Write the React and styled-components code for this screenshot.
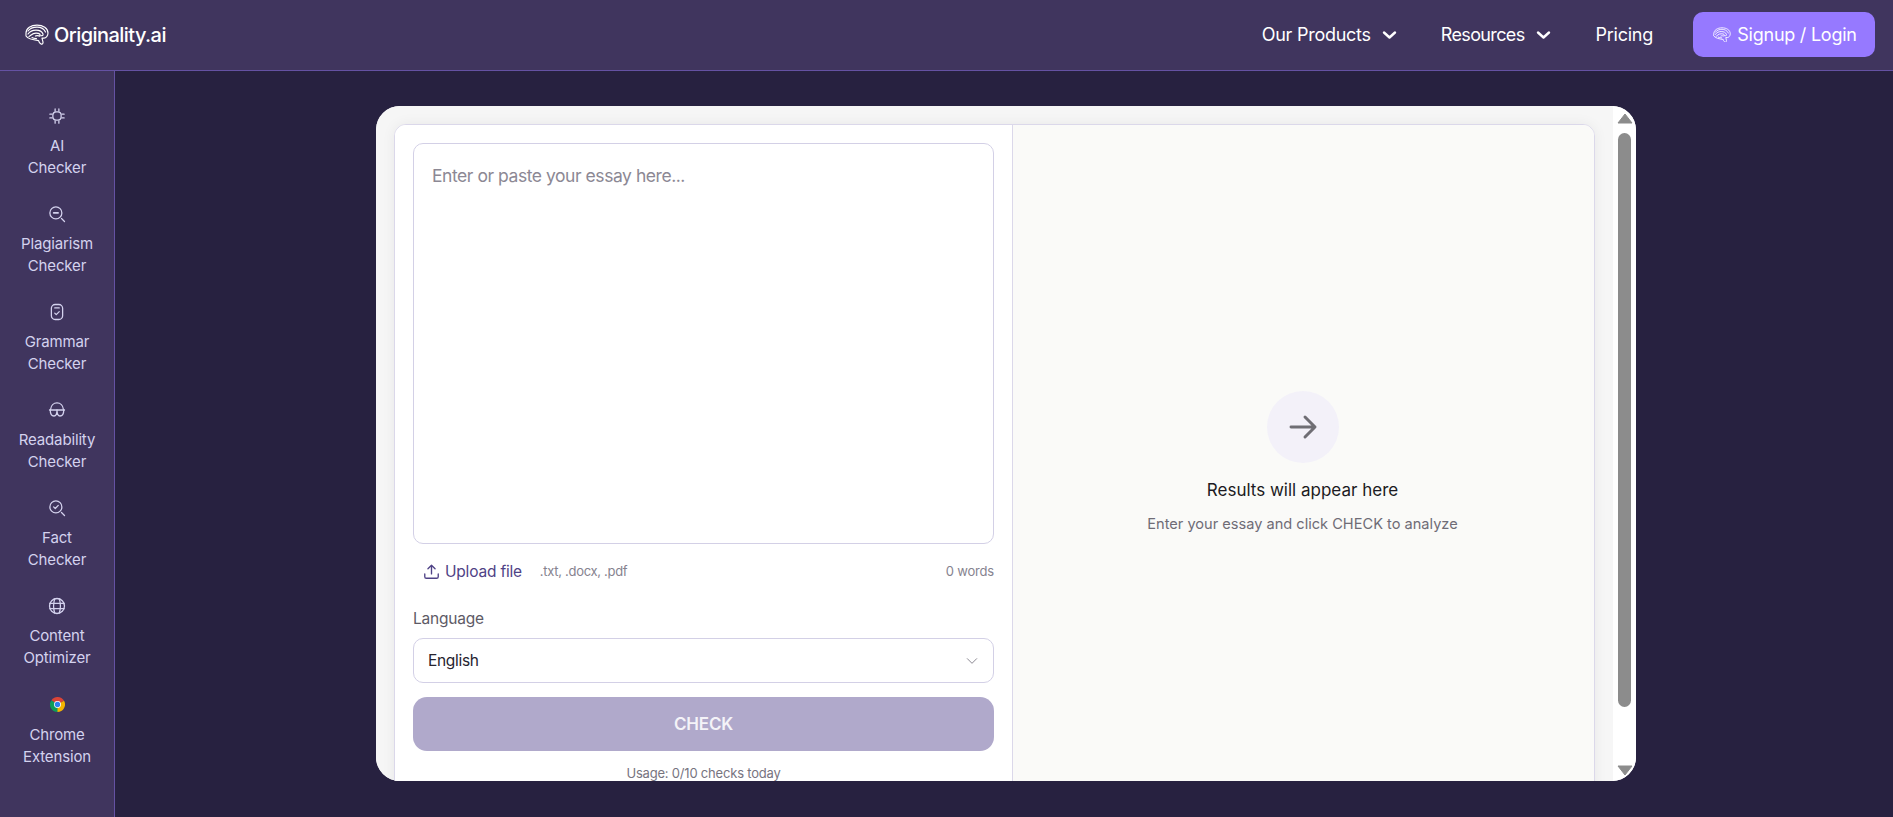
import React from "react";
import styled, { createGlobalStyle } from "styled-components";

const Global = createGlobalStyle`
  html, body { margin: 0; padding: 0; height: 100%; overflow: hidden; background: #272140; }
  body { font-family: Inter, "Liberation Sans", sans-serif; }
  * { box-sizing: border-box; }
`;
const Page = styled.div`display:flex;flex-direction:column;height:100vh;`;
const Header = styled.header`
  flex:none;height:71px;display:flex;align-items:center;justify-content:space-between;
  padding:0 18px 1px 25px;background:#40355e;border-bottom:1px solid #6552a3;
`;
const Logo = styled.div`display:flex;align-items:center;gap:5px;color:#fff;font-size:20px;font-weight:500;letter-spacing:-.55px;`;
const Nav = styled.nav`display:flex;align-items:center;`;
const NavItem = styled.a`
  display:flex;align-items:center;gap:11px;color:#fff;font-size:18px;font-weight:400;letter-spacing:${p=>p.$ls}px;margin-right:${p=>p.$mr}px;
`;
const LoginButton = styled.button`
  width:182px;height:45px;border:0;border-radius:10px;padding:0 0 0 2px;background:#9679ff;color:#fff;font:400 18px Inter,sans-serif;letter-spacing:-.25px;
  display:flex;align-items:center;justify-content:center;gap:6px;
`;
const Body = styled.div`flex:1;display:flex;min-height:0;`;
const Sidebar = styled.aside`
  flex:none;width:115px;background:#40355e;border-right:1px solid #6552a3;padding-top:35px;display:flex;flex-direction:column;
`;
const SideItem = styled.a`
  height:98.1px;display:flex;flex-direction:column;align-items:center;color:#d4d2ee;font-size:15px;line-height:22px;text-align:center;letter-spacing:-.15px;
`;
const SideIcon = styled.span`width:18px;height:20px;margin-bottom:9px;display:flex;align-items:center;justify-content:center;`;
const Main = styled.main`flex:1;padding:35px 257px 36px 261px;min-width:0;`;
const Card = styled.div`height:100%;display:flex;border-radius:24px;overflow:hidden;background:#fff;`;
const Scroll = styled.div`flex:1;min-width:0;overflow:hidden;background:#f6f6f6;padding:18px 18px 0 18px;`;
const Panel = styled.div`height:678px;display:flex;border:1px solid #dbd8ea;border-radius:12px;overflow:hidden;background:#fff;box-shadow:0 0 14px rgba(0,0,0,.06);`;
const Left = styled.section`flex:none;width:618px;padding:18px 18px 0 18px;border-right:1px solid #dbd8ea;background:#fff;`;
const Right = styled.section`flex:1;padding-right:2px;background:#fafaf8;display:flex;flex-direction:column;align-items:center;justify-content:center;`;
const Essay = styled.textarea`
  display:block;width:100%;height:401px;resize:none;border:1px solid #d3d0e6;border-radius:10px;background:#fff;padding:21px 18px;
  font:400 17.5px Inter,sans-serif;letter-spacing:-.45px;outline:none;
  &::placeholder{color:#8c8894;opacity:1;}
`;
const UploadRow = styled.div`height:54px;display:flex;align-items:center;`;
const UploadLink = styled.a`display:flex;align-items:center;gap:4px;margin-left:9px;color:#4f4286;font-size:15.5px;letter-spacing:-.2px;`;
const Formats = styled.span`margin-left:18px;color:#86838f;font-size:13px;letter-spacing:-.3px;`;
const Words = styled.span`margin-left:auto;color:#86838f;font-size:13px;letter-spacing:-.2px;`;
const FieldLabel = styled.label`display:block;margin-top:9px;height:31px;line-height:24px;color:#5d5a66;font-size:15.5px;letter-spacing:-.2px;`;
const Select = styled.div`
  height:45px;border:1px solid #d3d0e6;border-radius:10px;padding:0 14px;display:flex;align-items:center;justify-content:space-between;
  color:#26232e;font-size:15.5px;letter-spacing:-.3px;
`;
const CheckButton = styled.button`
  display:block;width:100%;height:54px;margin-top:14px;border:0;border-radius:14px;background:#b0a9cb;color:#f4f3f8;font:600 17px Inter,sans-serif;letter-spacing:-.2px;
`;
const Usage = styled.div`margin-top:14px;text-align:center;color:#77747f;font-size:13px;letter-spacing:-.2px;`;
const Circle = styled.div`width:72px;height:72px;border-radius:50%;background:#f3f1f9;display:flex;align-items:center;justify-content:center;color:#6f6e74;`;
const ResultTitle = styled.div`margin-top:15px;color:#1c1a22;font-size:17px;font-weight:400;line-height:24px;`;
const ResultText = styled.div`margin-top:11px;color:#6f6c76;font-size:14.6px;line-height:22px;`;
const Bar = styled.div`flex:none;width:23px;display:flex;flex-direction:column;align-items:center;padding:7px 0 5px;background:#fff;`;
const Thumb = styled.div`width:13px;flex:1;margin:9px 0 58px;background:#8c8c8c;border-radius:7px;`;

const Ico = ({ children, s = 18, sw = 1.5, c = "#d4d2ee", v = 24 }) => (
  <svg width={s} height={s} viewBox={`0 0 ${v} ${v}`} fill="none" stroke={c} strokeWidth={sw} strokeLinecap="round" strokeLinejoin="round">{children}</svg>
);
const Brain = ({ s = 24 }) => (
  <svg width={s} height={s * 0.88} viewBox="0 0 24 21" fill="none" stroke="#fff" strokeWidth="1.150" strokeLinecap="round" strokeLinejoin="round">
    <path d="M1 9C1 4 6 1 12 1s11 3 11 8c0 3-2 5-4 5h-2l1 4c.2 1.500-1 2.500-2 2-1-.6-2-1.500-2.400-3.500C9 16 3 15 1 12z" />
    <path d="M3 7c2-3 6-4 9-4s7 1.500 8.500 5" />
    <path d="M3 10c2-3 5-4 8-4s6 1 7 4c.4 1.500-1 2-2 1.500" />
    <path d="M4 12.500c2-1 3-3.500 7-3.500s4.500 1.500 4 3c-1 0-3-1-4.500 0" />
    <path d="M7 13.500c1 .7 3 1 4.500 1" />
  </svg>
);
const Chevron = () => (
  <svg width="15" height="10" viewBox="0 0 15 10" fill="none" stroke="#fff" strokeWidth="2.400" strokeLinecap="round" strokeLinejoin="round"><path d="M2 2.500l5.500 5 5.500-5" /></svg>
);
const Chrome = () => (
  <svg width="15" height="15" viewBox="0 0 48 48">
    <path fill="#db4437" d="M24 24L44.800 12A24 24 0 0 0 4.500 10z" />
    <path fill="#0f9d58" d="M24 24L4.500 10A24 24 0 0 0 24 48l10-14z" />
    <path fill="#f4b400" d="M24 24l20.800-12A24 24 0 0 1 24 48z" />
    <circle cx="24" cy="24" r="11" fill="#fff" /><circle cx="24" cy="24" r="8.500" fill="#2f80ed" />
  </svg>
);
const items = [
  ["AI", "Checker", <Ico sw={1.700}><rect x="6.500" y="6.500" width="11" height="11" rx="4.500" /><path d="M9.500 2.500v3M14.500 2.500v3M9.500 18.500v3M14.500 18.500v3M2.500 9.500h3M2.500 14.500h3M18.500 9.500h3M18.500 14.500h3" /></Ico>],
  ["Plagiarism", "Checker", <Ico sw={1.700}><circle cx="10.500" cy="10.500" r="8" /><path d="M7.500 10.500h6" strokeWidth="2.200" /><path d="M18 18l4 4" /></Ico>],
  ["Grammar", "Checker", <Ico sw={1.700}><rect x="4.500" y="2" width="15" height="20" rx="5" /><path d="M9 6.500h6M9 13.500l2 2 4-4" /></Ico>],
  ["Readability", "Checker", <Ico sw={1.700}><path d="M3.500 11C4 6 7.500 2.500 12 2.500s8 3.500 8.500 8.500" /><path d="M2 12h20" /><path d="M3 12c0 4 1.500 8 5 8s4-4 4-8c0 4 .5 8 4 8s5-4 5-8" /></Ico>],
  ["Fact", "Checker", <Ico sw={1.700}><circle cx="10.500" cy="10.500" r="8" /><path d="M7.500 10.500l2.200 2.200 4-4.200M18 18l4 4" /></Ico>],
  ["Content", "Optimizer", <Ico sw={1.700}><circle cx="12" cy="12" r="10" /><path d="M2.500 8.500h19M2.500 15.500h19M9 2.500c-2 6-2 13 0 19M15 2.500c2 6 2 13 0 19" /></Ico>],
  ["Chrome", "Extension", <Chrome />],
];
export default function App() {
  return (
    <Page>
      <Global />
      <Header>
        <Logo><Brain />Originality.ai</Logo>
        <Nav>
          <NavItem $mr={44} $ls={-0.25}>Our Products <Chevron /></NavItem>
          <NavItem $mr={45} $ls={-0.65}>Resources <Chevron /></NavItem>
          <NavItem $mr={40} $ls={-0.25}>Pricing</NavItem>
          <LoginButton><Brain s={18} />Signup / Login</LoginButton>
        </Nav>
      </Header>
      <Body>
        <Sidebar>
          {items.map(([a, b, ic]) => (
            <SideItem key={a}><SideIcon>{ic}</SideIcon>{a}<br />{b}</SideItem>
          ))}
        </Sidebar>
        <Main>
          <Card>
            <Scroll>
              <Panel>
                <Left>
                  <Essay placeholder="Enter or paste your essay here..." />
                  <UploadRow>
                    <UploadLink><Ico s={19} sw={1.700} c="#4f4286"><path d="M12 15V4M7.500 8.500L12 4l4.500 4.500M3.500 15v3.500a2 2 0 0 0 2 2h13a2 2 0 0 0 2-2V15" /></Ico>Upload file</UploadLink>
                    <Formats>.txt, .docx, .pdf</Formats>
                    <Words>0 words</Words>
                  </UploadRow>
                  <FieldLabel>Language</FieldLabel>
                  <Select>English<Ico s={14} c="#7a7782" sw={1.500}><path d="M4 8l8 8 8-8" /></Ico></Select>
                  <CheckButton>CHECK</CheckButton>
                  <Usage>Usage: 0/10 checks today</Usage>
                </Left>
                <Right>
                  <Circle><Ico s={32} c="#6f6e74" sw={2.200}><path d="M3 12h18M13.500 4.500L21 12l-7.500 7.500" /></Ico></Circle>
                  <ResultTitle>Results will appear here</ResultTitle>
                  <ResultText>Enter your essay and click CHECK to analyze</ResultText>
                </Right>
              </Panel>
            </Scroll>
            <Bar>
              <svg width="16" height="11" viewBox="0 0 16 11"><path d="M8 1L15 10H1z" fill="#8c8c8c" stroke="#8c8c8c" strokeLinejoin="round" /></svg>
              <Thumb />
              <svg width="16" height="11" viewBox="0 0 16 11"><path d="M8 10L15 1H1z" fill="#8c8c8c" stroke="#8c8c8c" strokeLinejoin="round" /></svg>
            </Bar>
          </Card>
        </Main>
      </Body>
    </Page>
  );
}
